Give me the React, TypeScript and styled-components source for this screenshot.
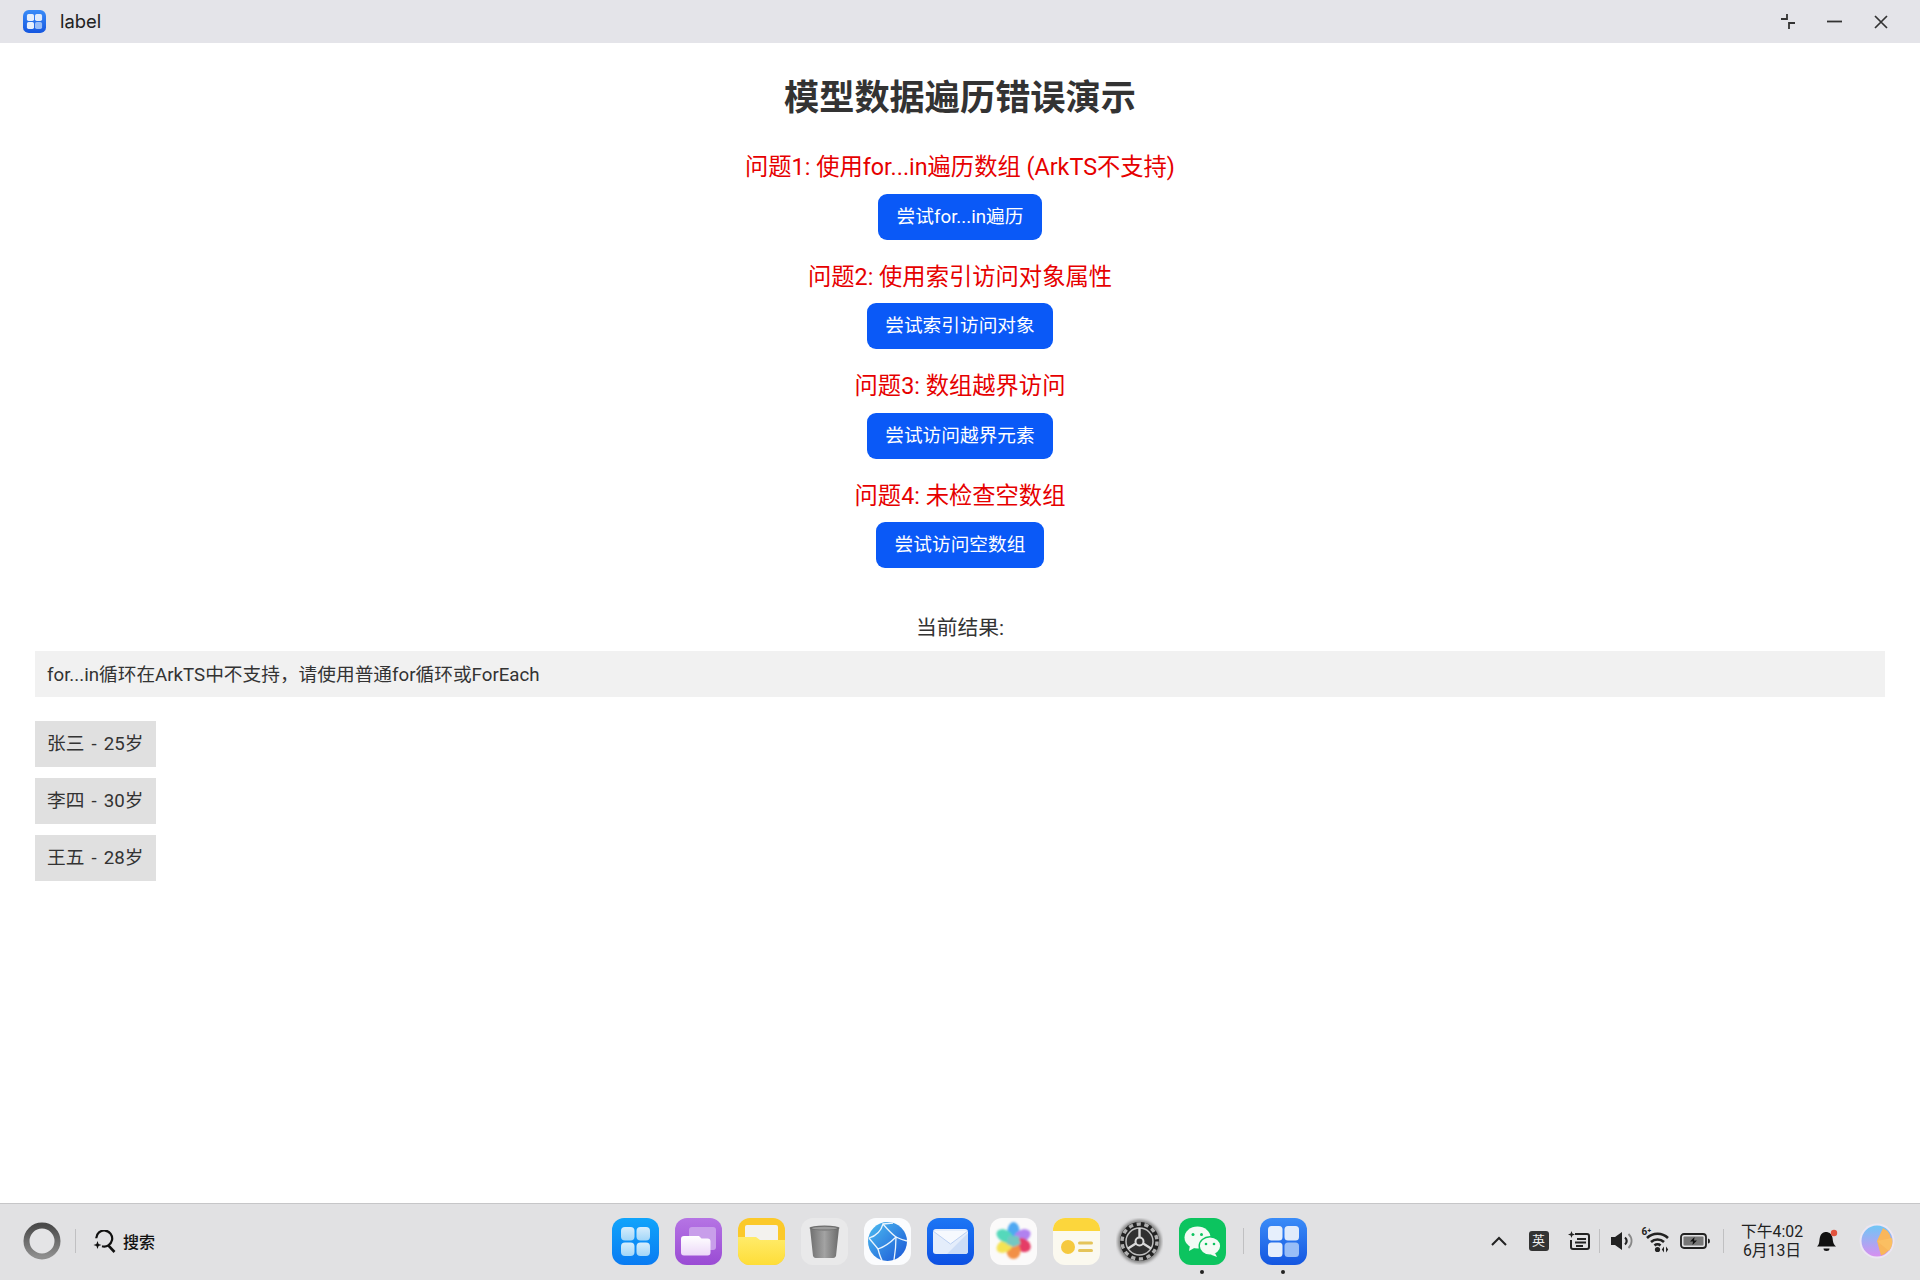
import React from "react";
import styled, { createGlobalStyle } from "styled-components";

const Global = createGlobalStyle`
  html, body { margin: 0; padding: 0; background: #fff; }
  body { font-family: Roboto, "Noto Sans CJK SC", "Noto Sans", sans-serif; }
`;
const Page = styled.div`
  width: 1920px; height: 1280px; display: flex; flex-direction: column; overflow: hidden;
`;
const TitleBar = styled.header`
  height: 43px; flex: none; background: #e4e4e9; display: flex; align-items: center; padding: 0 16px 0 23px;
`;
const AppName = styled.span`
  margin-left: 14px; padding-bottom: 2px; font-family: Inter, sans-serif; font-size: 18.4px; color: #222; flex: 1;
`;
const WinControl = styled.div`
  width: 46.5px; height: 43px; display: flex; align-items: center; justify-content: center;
`;
const Main = styled.main`
  flex: 1; display: flex; flex-direction: column; align-items: center; padding: 32px 35px 0; min-height: 0;
`;
const Heading = styled.h1`
  margin: 0 0 30px; font-size: 35.2px; line-height: 46px; font-weight: 700; color: #333;
`;
const Section = styled.section`
  display: flex; flex-direction: column; align-items: center; margin-bottom: 21px;
`;
const Problem = styled.div`
  font-size: 23.3px; line-height: 32.6px; color: #e60000; margin-bottom: 10px;
`;
const TryButton = styled.button`
  height: 46px; padding: 0 18.4px; border: 0; border-radius: 9px; background: #0a59f7; color: #fff;
  font: 400 18.7px/44px Roboto, "Noto Sans CJK SC", sans-serif;
`;
const ResultLabel = styled.div`
  margin-top: 26px; font-size: 20.8px; line-height: 26px; color: #333; margin-bottom: 10px;
`;
const ResultBox = styled.div`
  align-self: stretch; height: 46px; background: #f1f1f1; padding: 0 12px 4px; box-sizing: border-box; display: flex; align-items: center;
  font-size: 18.7px; color: #333; margin-bottom: 24px;
`;
const PersonList = styled.div`
  align-self: flex-start; display: flex; flex-direction: column; gap: 11px;
`;
const PersonRow = styled.div`
  height: 46px; width: 121px; box-sizing: border-box; background: #e0e0e0; padding: 0 12px 5px; display: flex; align-items: center;
  font-size: 18.7px; word-spacing: 2.5px; color: #333; white-space: nowrap;
`;
const Taskbar = styled.footer`
  height: 77px; flex: none; box-sizing: border-box; background: #e1e1e3; border-top: 1px solid #c6c6c8;
  display: grid; grid-template-columns: 1fr auto 1fr; align-items: center; padding: 0 25px 2px 23px;
`;
const StartArea = styled.div`
  display: flex; align-items: center;
`;
const Divider = styled.span<{ $h?: number; $ml: number }>`
  width: 1px; height: ${p => p.$h ?? 24}px; background: #c0c0c2; margin-left: ${p => p.$ml}px; flex: none;
`;
const SearchText = styled.span`
  margin-left: 7px; font-size: 16px; font-weight: 500; color: #111;
`;
const Dock = styled.div`
  display: flex; align-items: center; gap: 16px;
`;
const DockItem = styled.div<{ $running?: boolean }>`
  position: relative; width: 47px; height: 47px; flex: none;
  svg { display: block; }
  ${p => p.$running ? `&::after { content: ""; position: absolute; left: 21.5px; bottom: -9px; width: 4px; height: 4px; border-radius: 50%; background: #222; }` : ""}
`;
const Tray = styled.div`
  display: flex; align-items: center; justify-content: flex-end;
`;
const TrayItem = styled.div<{ $ml: number }>`
  position: relative; margin-left: ${p => p.$ml}px; display: flex; align-items: center; flex: none;
`;
const WifiBand = styled.span`
  position: absolute; left: 0; top: -3px; font-size: 10px; line-height: 12px; font-weight: 700; color: #222; white-space: nowrap;
`;
const LangBadge = styled.div`
  width: 20px; height: 20px; border-radius: 3px; background: #333; color: #eee; font-size: 13px; line-height: 20px; text-align: center; margin-left: 22px;
`;
const Clock = styled.div`
  margin-left: 16.5px; width: 64px; text-align: center; font-size: 15.8px; line-height: 19.5px; color: #222; white-space: nowrap; font-weight: 400;
`;

const AppTiles = ({ size }: { size: number }) => (
  <svg width={size} height={size} viewBox="0 0 47 47">
    <defs>
      <linearGradient id={`at${size}`} x1="0" y1="0" x2="0" y2="1"><stop offset="0" stopColor="#3a8cf8" /><stop offset="1" stopColor="#1456e0" /></linearGradient>
    </defs>
    <rect width="47" height="47" rx="12" fill={`url(#at${size})`} />
    <rect x="8" y="8" width="14.5" height="14.5" rx="3.5" fill="#e6effc" />
    <rect x="24.5" y="8" width="14.5" height="14.5" rx="3.5" fill="#e0ebfb" />
    <rect x="8" y="24.5" width="14.5" height="14.5" rx="3.5" fill="#e6effc" />
    <rect x="24.5" y="24.5" width="14.5" height="14.5" rx="3.5" fill="#98bdf7" />
  </svg>
);
const Launcher = () => (
  <svg width="47" height="47" viewBox="0 0 47 47">
    <defs>
      <linearGradient id="la" x1="0" y1="0" x2="0" y2="1"><stop offset="0" stopColor="#10a4fb" /><stop offset="1" stopColor="#0a7bf2" /></linearGradient>
      <linearGradient id="lb" x1="0" y1="0" x2="0" y2="1"><stop offset="0" stopColor="#d6edfc" /><stop offset="1" stopColor="#a2d6f8" /></linearGradient>
    </defs>
    <rect width="47" height="47" rx="12" fill="url(#la)" />
    {[[9, 9], [24.5, 9], [9, 24.5], [24.5, 24.5]].map(([x, y]) => <rect key={`${x}${y}`} x={x} y={y} width="13.5" height="13.5" rx="4" fill="url(#lb)" />)}
  </svg>
);
const MultiWindow = () => (
  <svg width="47" height="47" viewBox="0 0 47 47">
    <defs>
      <linearGradient id="mw" x1="0" y1="0" x2="0" y2="1"><stop offset="0" stopColor="#b574e4" /><stop offset="1" stopColor="#9a4bd4" /></linearGradient>
      <linearGradient id="mf" x1="0" y1="0" x2="0" y2="1"><stop offset="0" stopColor="#fff" /><stop offset="1" stopColor="#ecd8f8" /></linearGradient>
    </defs>
    <rect width="47" height="47" rx="12" fill="url(#mw)" />
    <rect x="14" y="9" width="27" height="23" rx="3" fill="#c89eea" />
    <path d="M6 21a3 3 0 0 1 3-3h15l2.5 2.5h6a3 3 0 0 1 3 3v11a3 3 0 0 1-3 3H9a3 3 0 0 1-3-3z" fill="url(#mf)" />
  </svg>
);
const Folder = () => (
  <svg width="47" height="47" viewBox="0 0 47 47">
    <defs><linearGradient id="fo" x1="0" y1="0" x2="0" y2="1"><stop offset="0" stopColor="#ffeb6a" /><stop offset="1" stopColor="#fedd38" /></linearGradient></defs>
    <rect width="47" height="47" rx="12" fill="#fbc92a" />
    <rect x="7" y="7" width="33" height="20" rx="2" fill="#f3f2ee" />
    <path d="M0 19h18l4 3h25v13a12 12 0 0 1-12 12H12A12 12 0 0 1 0 35z" fill="url(#fo)" />
  </svg>
);
const Trash = () => (
  <svg width="47" height="47" viewBox="0 0 47 47">
    <defs>
      <linearGradient id="tr" x1="0" y1="0" x2="1" y2="0"><stop offset="0" stopColor="#6f6f6f" /><stop offset=".5" stopColor="#a3a3a3" /><stop offset="1" stopColor="#6a6a6a" /></linearGradient>
    </defs>
    <rect width="47" height="47" rx="12" fill="#e9e9ea" />
    <path d="M9 10h29l-3 28a3 3 0 0 1-3 2H15a3 3 0 0 1-3-2z" fill="url(#tr)" />
    <ellipse cx="23.5" cy="10" rx="15" ry="2.6" fill="#6e6e6e" />
    <ellipse cx="23.5" cy="10.2" rx="12.5" ry="1.4" fill="#9d9d9d" />
  </svg>
);
const Browser = () => (
  <svg width="47" height="47" viewBox="0 0 47 47">
    <defs><linearGradient id="br" x1="0" y1="0" x2="1" y2="1"><stop offset="0" stopColor="#4dbdf0" /><stop offset="1" stopColor="#1a55d6" /></linearGradient></defs>
    <rect width="47" height="47" rx="12" fill="#fbfcfe" />
    <circle cx="23.5" cy="23.5" r="19.5" fill="url(#br)" />
    <g stroke="#eaf4fd" strokeWidth="1.3" fill="none">
      <path d="M5 20 C12 18 17 13 19 6 C24 12 28 16 32 19 C26 25 20 29 14 31 C11 27 8 24 5 20" />
      <path d="M32 19 C36 21 39 22 43 23 M32 19 C32 28 31 36 30 42 M14 31 C15 35 16 39 18 42 M19 6 L29 5" />
    </g>
  </svg>
);
const Mail = () => (
  <svg width="47" height="47" viewBox="0 0 47 47">
    <defs><linearGradient id="ma" x1="0" y1="0" x2="0" y2="1"><stop offset="0" stopColor="#1c76f5" /><stop offset="1" stopColor="#0d50e2" /></linearGradient></defs>
    <rect width="47" height="47" rx="12" fill="url(#ma)" />
    <rect x="6" y="11" width="35" height="25" rx="3" fill="#e4edfb" />
    <path d="M6 13 L23.5 26 L41 13" fill="#f6f9fe" stroke="#bcd1f3" strokeWidth="1" />
    <path d="M41 15 V33 a3 3 0 0 1 -3 3 H20 Z" fill="#cdddf6" />
  </svg>
);
const Photos = () => (
  <svg width="47" height="47" viewBox="0 0 47 47">
    <defs><filter id="ph" x="-20%" y="-20%" width="140%" height="140%"><feGaussianBlur stdDeviation="0.8" /></filter></defs>
    <rect width="47" height="47" rx="12" fill="#fbfafa" />
    <g transform="translate(23.5 23)" filter="url(#ph)" opacity=".95">
      <ellipse cx="0" cy="-10" rx="6" ry="9" fill="#44a4f2" />
      <ellipse cx="0" cy="-10" rx="6" ry="9" transform="rotate(60)" fill="#ad7cf0" />
      <ellipse cx="-1" cy="-10" rx="6.5" ry="8.5" transform="rotate(120)" fill="#e4335f" />
      <ellipse cx="0" cy="-10" rx="7" ry="8" transform="rotate(180)" fill="#f28b3e" />
      <ellipse cx="0" cy="-10" rx="6" ry="9" transform="rotate(240)" fill="#f5e24b" />
      <ellipse cx="0" cy="-10" rx="6" ry="9" transform="rotate(300)" fill="#4ed7b8" />
      <path d="M-5 -5 L5 -5 L7 3 L0 6 L-7 3 Z" fill="#6dc6c0" />
    </g>
  </svg>
);
const Notes = () => (
  <svg width="47" height="47" viewBox="0 0 47 47">
    <rect width="47" height="47" rx="12" fill="#fbf9ef" />
    <path d="M0 12 a12 12 0 0 1 12 -12 h23 a12 12 0 0 1 12 12 v1 H0z" fill="#fcd63c" />
    <circle cx="15" cy="29" r="7" fill="#f5c93f" />
    <rect x="25" y="23.5" width="15" height="3" rx="1.5" fill="#e5c45a" />
    <rect x="25" y="31" width="15" height="3" rx="1.5" fill="#e5c45a" />
  </svg>
);
const Gear = () => (
  <svg width="47" height="47" viewBox="0 0 47 47">
    <defs><filter id="gh" x="-20%" y="-20%" width="140%" height="140%"><feGaussianBlur stdDeviation="1.5" /></filter></defs>
    <circle cx="23.5" cy="23.5" r="22" fill="#8a8a8a" filter="url(#gh)" />
    <circle cx="23.5" cy="23.5" r="19.5" fill="#222" />
    <circle cx="23.5" cy="23.5" r="17.5" fill="none" stroke="#b0b0b0" strokeWidth="3.4" strokeDasharray="4.3 3.6" />
    <circle cx="23.5" cy="23.5" r="13.5" fill="#303030" stroke="#c0c0c0" strokeWidth="1.5" />
    <circle cx="23.5" cy="23.5" r="4" fill="none" stroke="#d8d8d8" strokeWidth="2" />
    <path d="M23.5 19.5 V10 M19.8 25.5 L12 30.5 M27.2 25.5 L35 30.5" stroke="#d8d8d8" strokeWidth="2.4" />
  </svg>
);
const WeChat = () => (
  <svg width="47" height="47" viewBox="0 0 47 47">
    <rect width="47" height="47" rx="12" fill="#0cc45f" />
    <ellipse cx="18.5" cy="19.5" rx="13" ry="11" fill="#f3fbf5" />
    <path d="M11 27 L10 33 L17 29 Z" fill="#f3fbf5" />
    <ellipse cx="31" cy="28" rx="10.8" ry="9.2" fill="#f3fbf5" stroke="#0cc45f" strokeWidth="1.4" />
    <path d="M36 35 L38 39 L31.5 36.5 Z" fill="#f3fbf5" />
    <circle cx="14" cy="16.5" r="1.5" fill="#0cc45f" /><circle cx="22.5" cy="16.5" r="1.5" fill="#0cc45f" />
    <circle cx="27" cy="26" r="1.3" fill="#0cc45f" /><circle cx="35" cy="26" r="1.3" fill="#0cc45f" />
  </svg>
);

export default function App() {
  const problems = [
    ["问题1: 使用for...in遍历数组 (ArkTS不支持)", "尝试for...in遍历"],
    ["问题2: 使用索引访问对象属性", "尝试索引访问对象"],
    ["问题3: 数组越界访问", "尝试访问越界元素"],
    ["问题4: 未检查空数组", "尝试访问空数组"],
  ];
  return (
    <Page>
      <Global />
      <TitleBar>
        <AppTiles size={23} />
        <AppName>label</AppName>
        <WinControl>
          <svg width="14" height="15" viewBox="0 0 14 15" fill="none" stroke="#333" strokeWidth="1.8">
            <path d="M0 5 H6 V0" /><path d="M8 15 V9 H14" />
          </svg>
        </WinControl>
        <WinControl>
          <svg width="15" height="3" viewBox="0 0 15 3"><path d="M0 1.5 H15" stroke="#333" strokeWidth="1.8" /></svg>
        </WinControl>
        <WinControl>
          <svg width="14" height="14" viewBox="0 0 14 14"><path d="M1 1 L13 13 M13 1 L1 13" stroke="#333" strokeWidth="1.7" /></svg>
        </WinControl>
      </TitleBar>
      <Main>
        <Heading>模型数据遍历错误演示</Heading>
        {problems.map(([q, b]) => (
          <Section key={q}>
            <Problem>{q}</Problem>
            <TryButton>{b}</TryButton>
          </Section>
        ))}
        <ResultLabel>当前结果:</ResultLabel>
        <ResultBox>for...in循环在ArkTS中不支持，请使用普通for循环或ForEach</ResultBox>
        <PersonList>
          <PersonRow>张三 - 25岁</PersonRow>
          <PersonRow>李四 - 30岁</PersonRow>
          <PersonRow>王五 - 28岁</PersonRow>
        </PersonList>
      </Main>
      <Taskbar>
        <StartArea>
          <svg width="38" height="38" viewBox="0 0 38 38">
            <defs><linearGradient id="ring" x1="0" y1="0" x2="0" y2="1"><stop offset="0" stopColor="#4a4a4a" /><stop offset="1" stopColor="#8e8e8e" /></linearGradient></defs>
            <circle cx="19" cy="19" r="15.5" fill="#e4e4e6" stroke="url(#ring)" strokeWidth="6" />
          </svg>
          <Divider $ml={14} />
          <TrayItem $ml={17}>
            <svg width="23" height="23" viewBox="0 0 23 23" fill="none" stroke="#111" strokeWidth="2.2">
              <path d="M3.2 8.2 A8 8 0 1 1 9 16.2" />
              <path d="M14.8 14.8 L21.5 22" strokeWidth="2.6" />
              <path d="M4.5 11 L5.6 13.9 L8.5 15 L5.6 16.1 L4.5 19 L3.4 16.1 L.5 15 L3.4 13.9 Z" fill="#111" stroke="none" />
            </svg>
          </TrayItem>
          <SearchText>搜索</SearchText>
        </StartArea>
        <Dock>
          <DockItem><Launcher /></DockItem>
          <DockItem><MultiWindow /></DockItem>
          <DockItem><Folder /></DockItem>
          <DockItem><Trash /></DockItem>
          <DockItem><Browser /></DockItem>
          <DockItem><Mail /></DockItem>
          <DockItem><Photos /></DockItem>
          <DockItem><Notes /></DockItem>
          <DockItem><Gear /></DockItem>
          <DockItem $running><WeChat /></DockItem>
          <Divider $ml={1} $h={26} />
          <DockItem $running><AppTiles size={47} /></DockItem>
        </Dock>
        <Tray>
          <TrayItem $ml={0}>
            <svg width="16" height="10" viewBox="0 0 16 10" fill="none"><path d="M1 9 L8 2 L15 9" stroke="#222" strokeWidth="2" /></svg>
          </TrayItem>
          <LangBadge>英</LangBadge>
          <TrayItem $ml={19}>
            <svg width="22" height="20" viewBox="0 0 22 20" fill="none" stroke="#222" strokeWidth="2">
              <path d="M7 3 H19 a2 2 0 0 1 2 2 V16 a2 2 0 0 1 -2 2 H5 a2 2 0 0 1 -2 -2 V9" />
              <path d="M9 8 H18 M7 11.5 H18 M8 15 H15" />
              <path d="M3.5 0 L4.4 2.6 L7 3.5 L4.4 4.4 L3.5 7 L2.6 4.4 L0 3.5 L2.6 2.6 Z" fill="#222" stroke="none" />
            </svg>
          </TrayItem>
          <Divider $ml={9} />
          <TrayItem $ml={11}>
            <svg width="24" height="18" viewBox="0 0 24 18" fill="none">
              <path d="M0 5 H4 L11 0 V18 L4 13 H0 Z" fill="#222" />
              <path d="M14 5.5 a4.5 4.5 0 0 1 0 7" stroke="#222" strokeWidth="2.2" />
              <path d="M17.5 2 a9.5 9.5 0 0 1 0 14" stroke="#888" strokeWidth="1.8" />
            </svg>
          </TrayItem>
          <TrayItem $ml={7}>
            <WifiBand>6⁺</WifiBand>
            <svg width="28" height="24" viewBox="0 0 28 24" fill="none">
              <path d="M5 9 a15 15 0 0 1 21 0 M9 13 a9.5 9.5 0 0 1 13 0 M12.5 16.5 a4.5 4.5 0 0 1 6 0" stroke="#222" strokeWidth="2.6" />
              <circle cx="15.5" cy="20.5" r="2.6" fill="#222" />
              <path d="M22 17.5 V23.5 L19.8 20.5 Z M24 17.5 V23.5 L26.2 20.5 Z" fill="#222" />
            </svg>
          </TrayItem>
          <TrayItem $ml={10}>
            <svg width="30" height="16" viewBox="0 0 30 16" fill="none">
              <rect x="1" y="1" width="25" height="14" rx="3" stroke="#222" strokeWidth="1.8" />
              <rect x="3.5" y="3.5" width="20" height="9" rx="1" fill="#777" />
              <path d="M28 5.5 a2 2.5 0 0 1 0 5" fill="#222" />
              <path d="M14.5 4 L10 8.6 H13 L12.5 12 L17 7.4 H14 Z" fill="#111" />
            </svg>
          </TrayItem>
          <Divider $ml={13} />
          <Clock>下午4:02<br />6月13日</Clock>
          <TrayItem $ml={12}>
            <svg width="22" height="24" viewBox="0 0 22 24">
              <path d="M1 17.5 C4 15 3 11 4 8 C5 4 8 3 10 3 C13 3 16 5 16.5 9 C17 12 17 15 20 17.5 Z" fill="#111" />
              <path d="M7.5 19.5 H13.5 A3 2.5 0 0 1 7.5 19.5 Z" fill="#111" />
              <circle cx="18" cy="4" r="3.2" fill="#e2543f" />
            </svg>
          </TrayItem>
          <TrayItem $ml={21}>
            <svg width="36" height="36" viewBox="0 0 36 36">
              <defs>
                <linearGradient id="av1" x1="0" y1="0" x2="0" y2="1"><stop offset="0" stopColor="#6fc6f5" /><stop offset="1" stopColor="#d78ff0" /></linearGradient>
              </defs>
              <circle cx="18" cy="18" r="17.5" fill="#ece6f2" />
              <circle cx="18" cy="18" r="15.5" fill="url(#av1)" />
              <path d="M18 18 L24 5 A15 15 0 0 1 22 32.5 Z" fill="#f9b65a" />
              <path d="M18 18 L33 15 A15.5 15.5 0 0 1 30 28 Z" fill="#fbbf62" />
            </svg>
          </TrayItem>
        </Tray>
      </Taskbar>
    </Page>
  );
}
